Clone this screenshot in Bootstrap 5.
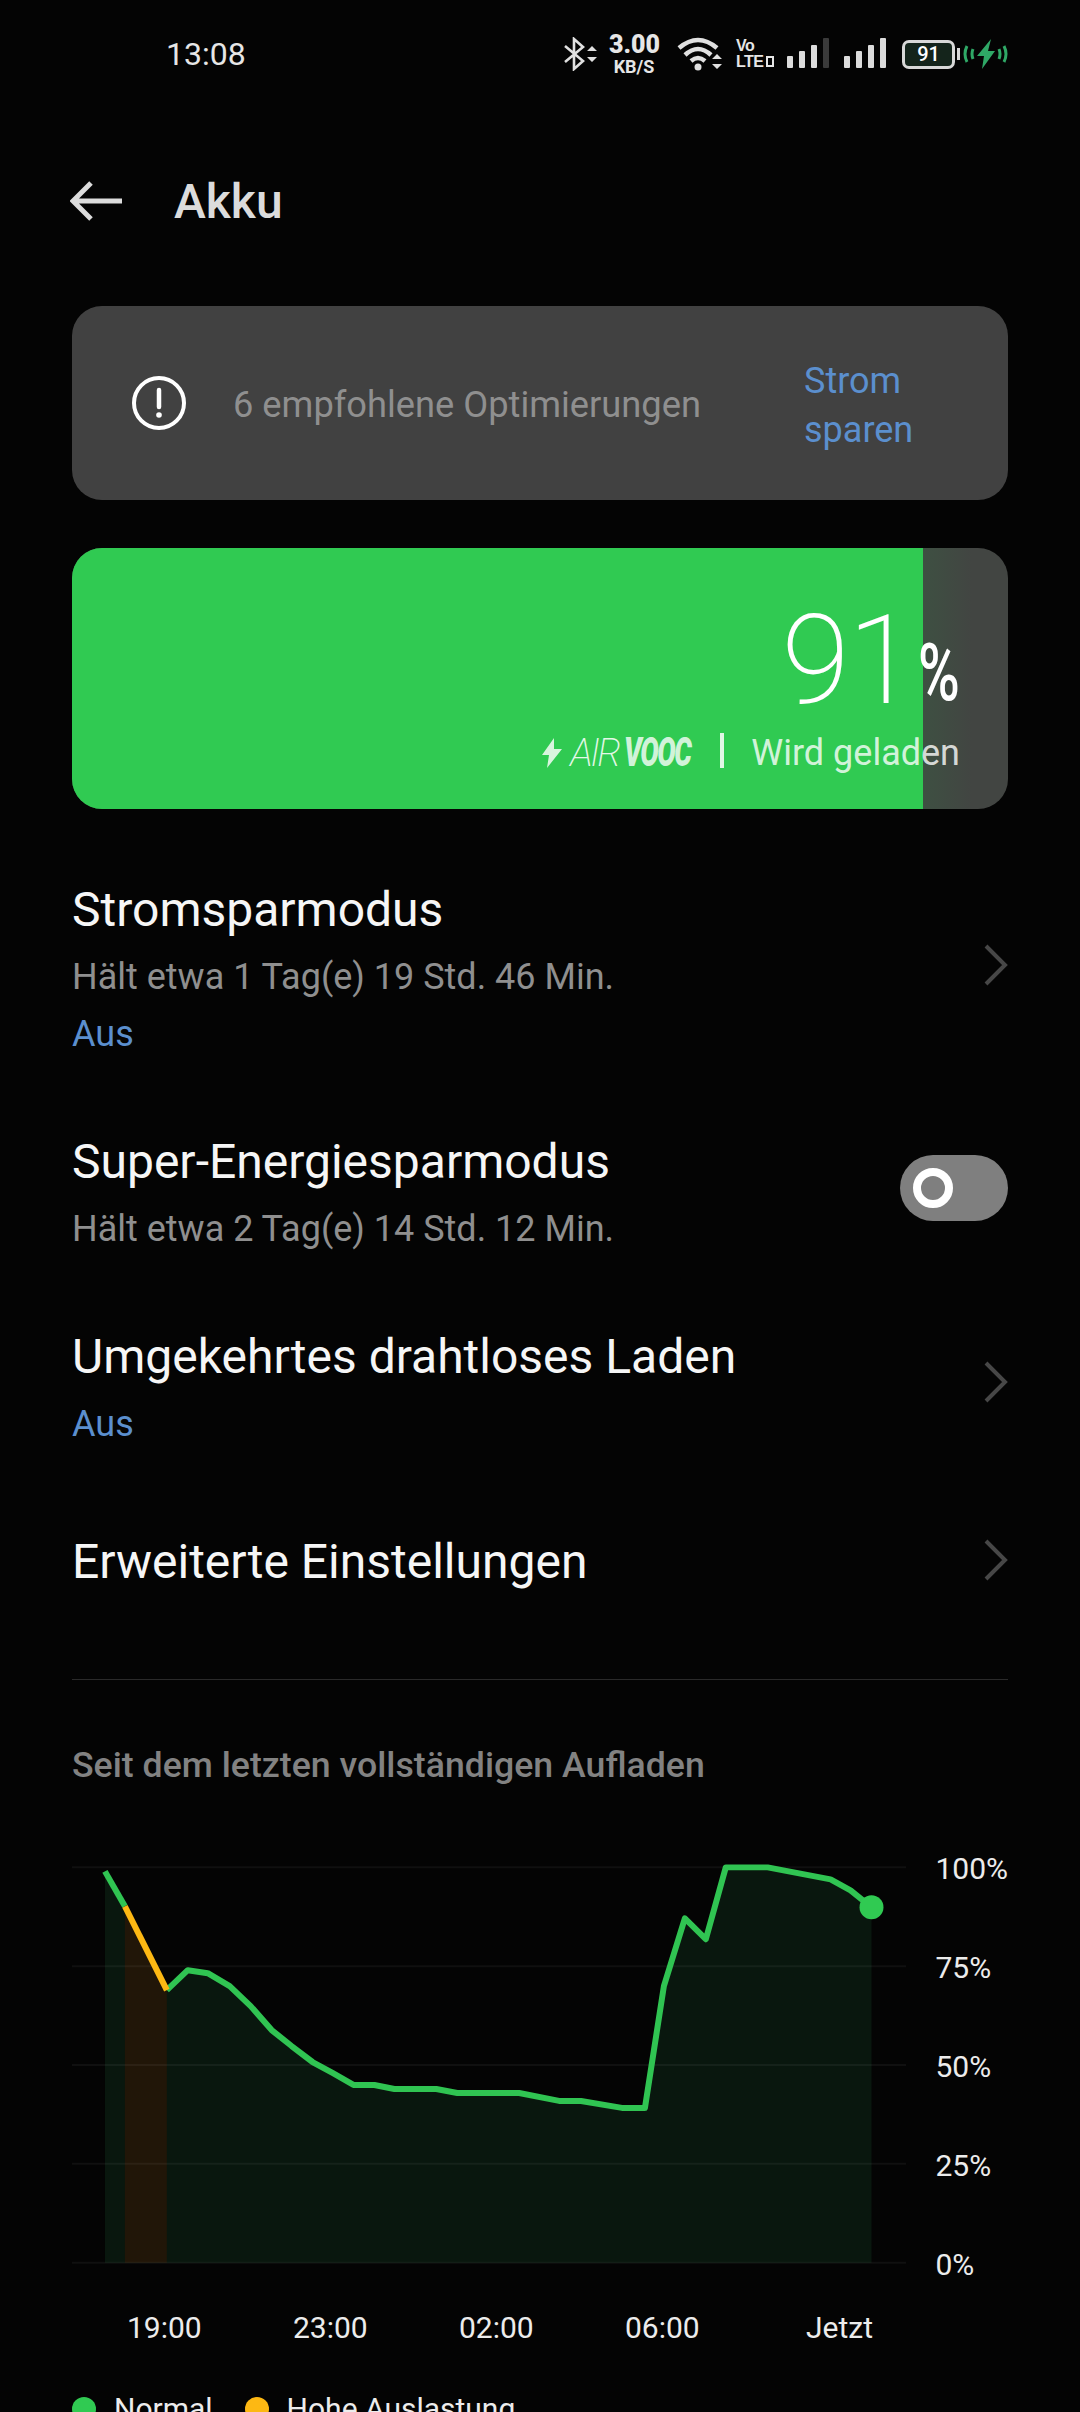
<!DOCTYPE html>
<html lang="de">
<head>
  <meta charset="UTF-8" />
  <meta name="viewport" content="width=device-width, initial-scale=1.0" />
  <title>Akku</title>
  <link href="https://cdn.jsdelivr.net/npm/bootstrap@5.3.3/dist/css/bootstrap.min.css" rel="stylesheet" />
  <style>
    html, body { height: 2412px; overflow: hidden; }
    body { background: #040404 !important; color: #fff; font-family: Roboto, "Noto Sans", sans-serif; }

    /* status bar */
    .status-bar { height: 108px; padding: 0 72px 0 166px; color: #e6e6e6; }
    .status-time { font-size: 32px; line-height: 1; }
    .net-speed { font-weight: 700; line-height: 1; margin: 0 18px 0 3px; width: 50px; text-align: center; }
    .net-speed b { display: block; font-size: 25px; }
    .net-speed i { display: block; font-size: 18px; font-style: normal; margin-top: 1px; }
    .volte { font-family: "Liberation Sans", sans-serif; font-weight: 700; font-size: 16px; line-height: 16px; width: 34px; margin: 0 17px 0 13px; letter-spacing: -.5px; }
    .volte span { display: block; white-space: nowrap; }
    .volte em { display: inline-block; width: 8px; height: 11px; margin-left: 2px; border: 2px solid #e6e6e6; }
    .batt { width: 53px; height: 29px; border: 3px solid #d8d8d8; border-radius: 7px; background: #14241b; font-size: 20px; font-weight: 500; line-height: 23px; text-align: center; color: #fff; }

    /* header */
    .app-header { height: 198px; padding: 0 72px 12px 70px; gap: 52px; }
    .app-title { font-size: 48px; font-weight: 500; color: #dcdcdc; line-height: 1; margin-top: 2px; }

    .page-pad { padding: 0 72px; }

    /* tip card */
    .tip-card { height: 194px; background: #414141; border-radius: 30px; padding: 0 50px 0 60px; }
    .tip-text { font-size: 36.25px; color: #8f8f8f; margin: 5px 0 0 47px; flex: 1; white-space: nowrap; }
    .tip-link { font-size: 36px; line-height: 49px; color: #5b8fce; width: 154px; margin-top: 6px; }

    /* battery bar */
    .charge-card { height: 261px; margin-top: 48px; border-radius: 30px; overflow: hidden; background: linear-gradient(90deg, #3e5042 851px, #424542 900px); }
    .charge-fill { width: 851px; height: 100%; background: #30ca52; }
    .charge-info { right: 48px; top: 0; bottom: 0; padding-top: 14px; }
    .charge-num { font-size: 124px; font-weight: 200; line-height: 1; letter-spacing: -2px; }
    .charge-pct { font-size: 80px; font-weight: 500; line-height: 1; margin-left: -13px; transform: translateY(-3px) scaleX(.71); transform-origin: right; }
    .charge-line { color: rgba(255,255,255,.8); font-size: 36px; line-height: 40px; margin-top: 10px; }
    .air-txt { font-style: italic; font-weight: 200; font-size: 38px; letter-spacing: -2.5px; width: 54px; color: #e4f8e8; }
    .vooc-txt { display: inline-block; width: 67px; font-style: italic; font-weight: 900; font-size: 40px; letter-spacing: -2px; transform: scaleX(.69); transform-origin: left; white-space: nowrap; }
    .charge-sep { width: 4px; height: 35px; background: rgba(255,255,255,.85); margin: 0 27px 4px 29px; }

    /* settings */
    .set-row { gap: 20px; }
    .set-name { font-size: 48px; line-height: 60px; color: #f6f6f6; }
    .set-sub { font-size: 36px; line-height: 58px; color: #8f8f8f; margin-top: 8px; }
    .set-sub + .set-off { margin-top: -1.5px; }
    .set-off { font-size: 36px; line-height: 59px; color: #5b8fce; }
    .gap-a { margin-top: 71px; }
    .gap-b { margin-top: 68.5px; }
    .gap-c { margin-top: 69px; }
    .gap-d { margin-top: 78px; }
    .nudge-up { margin-top: -14px; }
    .nudge-more { margin-top: -17px; }
    .nudge-last { margin-top: -5px; }
    .toggle-off { width: 108px; height: 66px; background: #7f7f7f; border-radius: 33px; padding-left: 13px; }
    .toggle-off span { width: 40px; height: 40px; border: 8px solid #fff; border-radius: 50%; }
    .hr-line { height: 1px; background: #2a2a2a; margin-top: 87px; }
    .section-name { font-size: 35.7px; font-weight: 500; line-height: 50px; color: #828282; margin-top: 60px; }

    /* chart */
    .chart-wrap { margin-top: 70px; }
    .y-labels { height: 436px; margin: -11px 0 0 29px; font-size: 30px; line-height: 40px; color: #ececec; }
    .x-labels { font-size: 30px; line-height: 40px; color: #ececec; padding-left: 55px; margin-top: 23px; }
    .x-labels span { width: 166px; }
    .x-labels span:last-child { width: 82px; text-align: right; }
    .legend-row { font-size: 30px; line-height: 40px; color: #ececec; margin-top: 41px; }
    .legend-dot { width: 24px; height: 24px; border-radius: 50%; margin-right: 18px; }
    .legend-item { margin-right: 32px; }
  </style>
</head>
<body>
  <div class="status-bar d-flex align-items-center">
    <div class="status-time flex-grow-1">13:08</div>
    <svg width="34" height="34" viewBox="0 0 34 34" class="me-2" fill="none">
      <path d="M1 9 L19 24 L10 32 V2 L19 10 L1 25" stroke="#e0e0e0" stroke-width="2.6"/>
      <path d="M23 14 L28 9 L33 14 Z M23 20 L28 25 L33 20 Z" fill="#e0e0e0"/>
    </svg>
    <div class="net-speed"><b>3.00</b><i>KB/S</i></div>
    <svg width="46" height="34" viewBox="0 0 46 34" fill="none">
      <path d="M2 11 Q21 -5 40 11 M8 18 Q21 6 34 18 M14 24 Q21 18 28 24" stroke="#e0e0e0" stroke-width="4.5"/>
      <circle cx="21" cy="30" r="3.5" fill="#e0e0e0"/>
      <path d="M35 22 L40 17 L45 22 Z M35 27 L40 32 L45 27 Z" fill="#e0e0e0"/>
    </svg>
    <div class="volte"><span>Vo</span><span>LTE<em></em></span></div>
    <svg width="99" height="32" viewBox="0 0 99 32" class="me-3">
      <g fill="#dcdcdc">
        <rect x="0" y="18" width="6" height="12" rx="1"/><rect x="12" y="13" width="6" height="17" rx="1"/><rect x="24" y="7" width="6" height="23" rx="1"/>
        <rect x="57" y="18" width="6" height="12" rx="1"/><rect x="69" y="13" width="6" height="17" rx="1"/><rect x="81" y="7" width="6" height="23" rx="1"/><rect x="93" y="0" width="6" height="30" rx="1"/>
      </g>
      <rect x="36" y="0" width="6" height="30" rx="1" fill="#3a3a3a"/>
    </svg>
    <div class="batt">91</div>
    <svg width="53" height="30" viewBox="0 0 53 30" fill="none">
      <rect x="2" y="9" width="3" height="12" fill="#d8d8d8"/>
      <path d="M12 7 Q8 15 12 23 M18 10 Q16 15 18 20 M44 10 Q46 15 44 20 M49 7 Q53 15 49 23" stroke="#2fa866" stroke-width="3"/>
      <path d="M36 0 L22 17 H29 L27 30 L40 12 H33 Z" fill="#2fa866"/>
    </svg>
  </div>

  <div class="app-header d-flex align-items-center">
    <svg width="52" height="40" viewBox="0 0 52 40" fill="none">
      <path d="M52 20 H3 M21 2 L3 20 L21 38" stroke="#dcdcdc" stroke-width="5"/>
    </svg>
    <div class="app-title">Akku</div>
  </div>

  <div class="page-pad">
    <div class="tip-card d-flex align-items-center">
      <svg width="54" height="54" viewBox="0 0 54 54" fill="none">
        <circle cx="27" cy="27" r="25" stroke="#fff" stroke-width="4"/>
        <path d="M27 14 V31" stroke="#fff" stroke-width="4.5" stroke-linecap="round"/>
        <circle cx="27" cy="39" r="2.8" fill="#fff"/>
      </svg>
      <div class="tip-text">6 empfohlene Optimierungen</div>
      <div class="tip-link">Strom sparen</div>
    </div>

    <div class="charge-card position-relative">
      <div class="charge-fill"></div>
      <div class="charge-info position-absolute d-flex flex-column justify-content-center align-items-end">
        <div class="d-flex align-items-baseline"><span class="charge-num">91</span><span class="charge-pct">%</span></div>
        <div class="charge-line d-flex align-items-center">
          <svg width="20" height="30" viewBox="0 0 20 30" class="me-2"><path d="M12 0 L0 17 H7 L5 30 L20 11 H12 Z" fill="#d8f5de"/></svg>
          <span class="air-txt">AIR</span><span class="vooc-txt">VOOC</span>
          <span class="charge-sep"></span>
          <span>Wird geladen</span>
        </div>
      </div>
    </div>

    <div class="set-row gap-a d-flex align-items-center justify-content-between">
      <div>
        <div class="set-name">Stromsparmodus</div>
        <div class="set-sub">Hält etwa 1 Tag(e) 19 Std. 46 Min.</div>
        <div class="set-off">Aus</div>
      </div>
      <svg class="nudge-up" width="24" height="42" viewBox="0 0 24 42" fill="none"><path d="M2 2 L21 21 L2 40" stroke="#474747" stroke-width="4"/></svg>
    </div>

    <div class="set-row gap-b d-flex align-items-center justify-content-between">
      <div>
        <div class="set-name">Super-Energiesparmodus</div>
        <div class="set-sub">Hält etwa 2 Tag(e) 14 Std. 12 Min.</div>
      </div>
      <div class="toggle-off nudge-up d-flex align-items-center"><span></span></div>
    </div>

    <div class="set-row gap-c d-flex align-items-center justify-content-between">
      <div>
        <div class="set-name">Umgekehrtes drahtloses Laden</div>
        <div class="set-off mt-2">Aus</div>
      </div>
      <svg class="nudge-more" width="24" height="42" viewBox="0 0 24 42" fill="none"><path d="M2 2 L21 21 L2 40" stroke="#474747" stroke-width="4"/></svg>
    </div>

    <div class="set-row gap-d d-flex align-items-center justify-content-between">
      <div class="set-name">Erweiterte Einstellungen</div>
      <svg class="nudge-last" width="24" height="42" viewBox="0 0 24 42" fill="none"><path d="M2 2 L21 21 L2 40" stroke="#474747" stroke-width="4"/></svg>
    </div>

    <div class="hr-line"></div>
    <div class="section-name">Seit dem letzten vollständigen Aufladen</div>

    <div class="chart-wrap d-flex align-items-start">
      <svg width="836" height="410" viewBox="72 1860 836 410" fill="none">
        <polygon fill="#09170e" points="105,1871 125,1906 167,1990 188,1970 208,1973 230,1986 251,2006 272,2030 292,2046 313,2062 333,2073 354,2085 375,2085 395,2089 437,2089 458,2093 520,2093 560,2101 582,2101 623,2108 646,2108 665,1986 686,1918 707,1939 727,1867 769,1867 832,1879 852,1890 873,1907 873,2263 105,2263"/>
        <polygon fill="#211608" points="125,1906 167,1990 167,2263 125,2263"/>
        <path stroke="#fff" stroke-opacity=".05" stroke-width="2" d="M72 1867 H908 M72 1966 H908 M72 2065 H908 M72 2164 H908 M72 2263 H908"/>
        <polyline stroke="#30c452" stroke-width="6" stroke-linejoin="round" points="105,1871 125,1906"/>
        <polyline stroke="#30c452" stroke-width="6" stroke-linejoin="round" points="167,1990 188,1970 208,1973 230,1986 251,2006 272,2030 292,2046 313,2062 333,2073 354,2085 375,2085 395,2089 437,2089 458,2093 520,2093 560,2101 582,2101 623,2108 646,2108 665,1986 686,1918 707,1939 727,1867 769,1867 832,1879 852,1890 873,1907"/>
        <polyline stroke="#fdb813" stroke-width="6" points="125,1906 167,1990"/>
        <circle cx="873" cy="1907" r="12" fill="#30ca52"/>
      </svg>
      <div class="y-labels d-flex flex-column justify-content-between">
        <span>100%</span><span>75%</span><span>50%</span><span>25%</span><span>0%</span>
      </div>
    </div>

    <div class="x-labels d-flex">
      <span>19:00</span><span>23:00</span><span>02:00</span><span>06:00</span><span>Jetzt</span>
    </div>

    <div class="legend-row d-flex align-items-center">
      <span class="legend-dot" style="background:#30ca52"></span><span class="legend-item">Normal</span>
      <span class="legend-dot" style="background:#fdb813"></span><span>Hohe Auslastung</span>
    </div>
  </div>

  <script src="https://cdn.jsdelivr.net/npm/bootstrap@5.3.3/dist/js/bootstrap.bundle.min.js"></script>
</body>
</html>
